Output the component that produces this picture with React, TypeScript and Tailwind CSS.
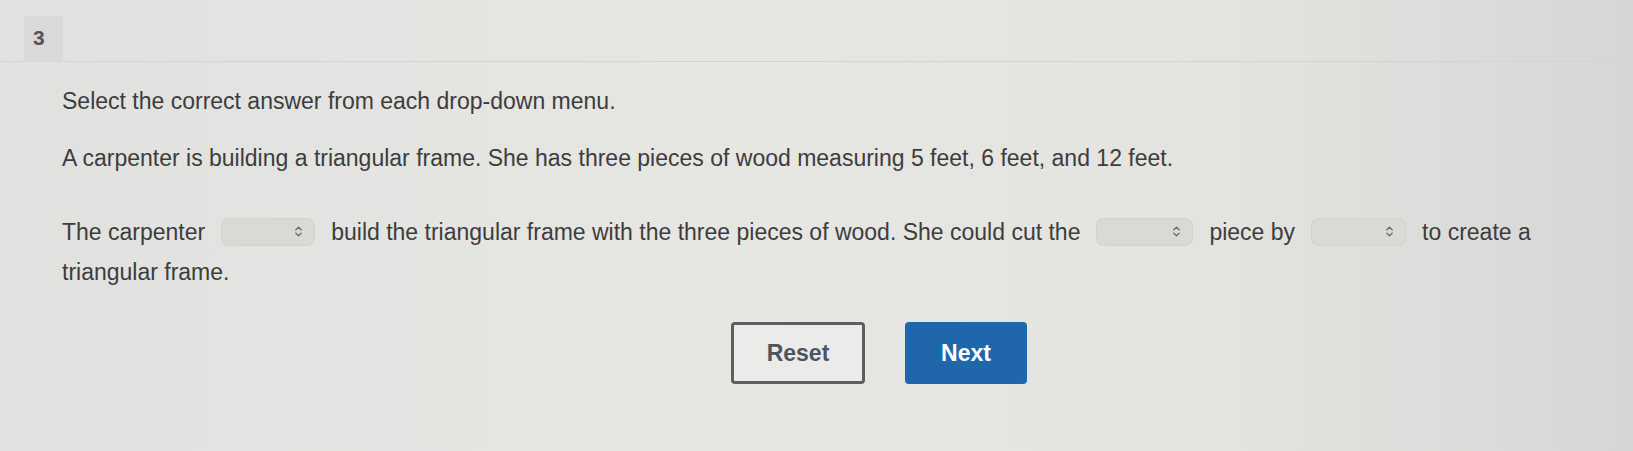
import { ChevronsUpDown } from "lucide-react"

function Dropdown({ width = "w-[94px]" }: { width?: string }) {
  return (
    <span className={`inline-flex items-center justify-end align-middle ${width} h-[28px] mx-[16px] -mt-[4px] rounded-[8px] bg-[#d9d9d6] pr-[10px] shadow-[inset_0_0_0_1px_rgba(0,0,0,0.03)]`}>
      <ChevronsUpDown className="w-[13px] h-[13px] text-[#6a6a6a]" strokeWidth={2.6} />
    </span>
  )
}

export default function App() {
  return (
    <div className="w-[1633px] h-[451px] overflow-hidden bg-[linear-gradient(90deg,#e1e1df_0%,#e6e6e3_45%,#e3e3e0_75%,#d6d6d4_100%)] font-['Liberation_Sans',Arial,sans-serif] text-[#3d3d3d]">
      {/* шапка с номером вопроса */}
      <div className="h-[62px] border-b border-[#d3d3d1] flex items-start">
        <div className="ml-[24px] mt-[16px] w-[39px] h-[46px] bg-[#d9d9d7] flex justify-start pl-[9px] pt-[11px]">
          <span className="text-[21px] font-bold leading-none text-[#555555]">3</span>
        </div>
      </div>

      <div className="pl-[62px] pr-[60px]">
        <p className="mt-[26px] text-[23px] leading-[26px]">
          Select the correct answer from each drop-down menu.
        </p>
        <p className="mt-[31px] text-[23px] leading-[26px]">
          A carpenter is building a triangular frame. She has three pieces of wood measuring 5 feet, 6 feet, and 12 feet.
        </p>
        <p className="mt-[41px] text-[23px] leading-[40px]">
          The carpenter
          <Dropdown />
          build the triangular frame with the three pieces of wood. She could cut the
          <Dropdown width="w-[97px]" />
          piece by
          <Dropdown width="w-[95px]" />
          to create a
          <br />
          triangular frame.
        </p>

        <div className="mt-[30px] flex gap-[40px] pl-[669px]">
          <button className="w-[134px] h-[62px] rounded-[4px] border-[3px] border-[#5e5e5e] bg-[#ebebea] text-[23px] font-bold text-[#4b5563]">
            Reset
          </button>
          <button className="w-[122px] h-[62px] rounded-[4px] bg-[#1f67aa] text-[23px] font-bold text-white">
            Next
          </button>
        </div>
      </div>
    </div>
  )
}
